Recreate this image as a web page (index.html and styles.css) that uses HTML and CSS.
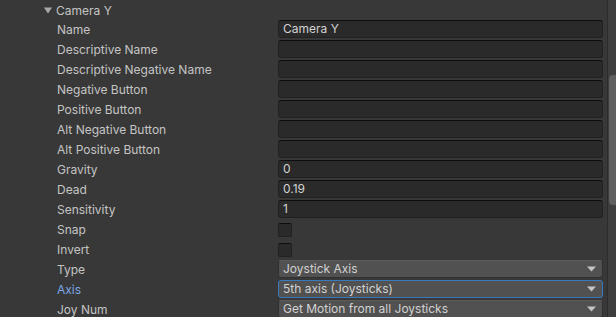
FILE: index.html
```html
<!DOCTYPE html>
<html>

<head>
    <title>Input Manager</title>
    <link rel="stylesheet" href="styles.css">
</head>

<body>
    <div class="inspector">
        <div class="content">
            <div class="header">
                <svg class="foldout" width="8" height="7" viewBox="0 0 8 7"><path d="M0 0.5 L8 0.5 L4 6.5 Z" fill="#a8a8a8"/></svg>
                <span>Camera Y</span>
            </div>

            <div class="row"><div class="label">Name</div><div class="field text">Camera Y</div></div>
            <div class="row"><div class="label">Descriptive Name</div><div class="field text"></div></div>
            <div class="row"><div class="label">Descriptive Negative Name</div><div class="field text"></div></div>
            <div class="row"><div class="label">Negative Button</div><div class="field text"></div></div>
            <div class="row"><div class="label">Positive Button</div><div class="field text"></div></div>
            <div class="row"><div class="label">Alt Negative Button</div><div class="field text"></div></div>
            <div class="row"><div class="label">Alt Positive Button</div><div class="field text"></div></div>
            <div class="row"><div class="label">Gravity</div><div class="field text">0</div></div>
            <div class="row"><div class="label">Dead</div><div class="field text">0.19</div></div>
            <div class="row"><div class="label">Sensitivity</div><div class="field text">1</div></div>
            <div class="row"><div class="label">Snap</div><div class="checkbox"></div></div>
            <div class="row"><div class="label">Invert</div><div class="checkbox"></div></div>
            <div class="row"><div class="label">Type</div><div class="field dropdown"><span>Joystick Axis</span><svg width="9" height="6" viewBox="0 0 9 6"><path d="M0 0.5 L9 0.5 L4.5 5.5 Z" fill="#c4c4c4"/></svg></div></div>
            <div class="row"><div class="label focused">Axis</div><div class="field dropdown active"><span>5th axis (Joysticks)</span><svg width="9" height="6" viewBox="0 0 9 6"><path d="M0 0.5 L9 0.5 L4.5 5.5 Z" fill="#c4c4c4"/></svg></div></div>
            <div class="row"><div class="label">Joy Num</div><div class="field dropdown"><span>Get Motion from all Joysticks</span><svg width="9" height="6" viewBox="0 0 9 6"><path d="M0 0.5 L9 0.5 L4.5 5.5 Z" fill="#c4c4c4"/></svg></div></div>
        </div>
        <div class="scrollbar">
            <div class="thumb"></div>
        </div>
    </div>
</body>

</html>
```

FILE: styles.css
```css
html, body {
    margin: 0;
    padding: 0;
    height: 100%;
    overflow: hidden;
}

body {
    background-color: #383838;
    font-family: Inter, "Noto Sans", sans-serif;
    font-size: 12px;
    color: #c4c4c4;
}

.inspector {
    display: flex;
    height: 317px;
}

.content {
    flex: 1;
    padding-right: 4px;
}

.header {
    display: flex;
    align-items: center;
    height: 20px;
    padding-left: 44px;
}

.foldout {
    margin-right: 4px;
}

.row {
    display: flex;
    align-items: center;
    height: 18px;
    margin-bottom: 2px;
    padding-left: 57px;
}

.label {
    width: 221px;
    flex-shrink: 0;
    white-space: nowrap;
}

.label.focused {
    color: #7ba7e8;
}

.field {
    flex: 1;
    height: 18px;
    box-sizing: border-box;
    border-radius: 3px;
    padding: 0 4px;
    line-height: 16px;
    color: #d2d2d2;
    white-space: nowrap;
}

.text {
    background-color: #2a2a2a;
    border: 1px solid #212121;
    border-top-color: #0d0d0d;
}

.dropdown {
    display: flex;
    align-items: center;
    justify-content: space-between;
    background-color: #515151;
    border: 1px solid #303030;
    border-top-color: #5a5a5a;
    padding-right: 6px;
}

.dropdown.active {
    border-color: #3a79bb;
}

.checkbox {
    width: 14px;
    height: 14px;
    box-sizing: border-box;
    background-color: #2a2a2a;
    border: 1px solid #212121;
    border-top-color: #0d0d0d;
    border-radius: 2px;
    margin-top: 2px;
}

.scrollbar {
    width: 8px;
    border-left: 1px solid #2c2c2c;
    background-color: #3e3e3e;
    padding-top: 75px;
}

.thumb {
    margin-left: 1px;
    height: 130px;
    background-color: #5f5f5f;
    border-radius: 4px 0 0 4px;
}
```
